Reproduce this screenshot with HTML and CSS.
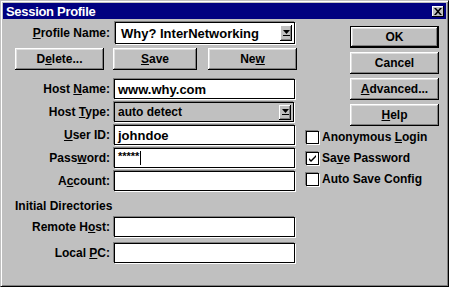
FILE: index.html
```html
<!DOCTYPE html>
<html lang="en">
<head>
    <meta charset="UTF-8">
    <title>Session Profile</title>
    <link rel="stylesheet" href="styles.css">
</head>
<body>
    <div class="dialog">
        <div class="titlebar">
            <span class="title">Session Profile</span>
            <span class="close">
                <svg width="8" height="7" viewBox="0 0 8 7"><path d="M0 0h2l2 2.2L6 0h2L5 3.5 8 7H6L4 4.8 2 7H0l3-3.5z" fill="#000"/></svg>
            </span>
        </div>
        <div class="main">
            <div class="form">
                <div class="row">
                    <label class="lbl"><u>P</u>rofile Name:</label>
                    <div class="combo big">
                        <span class="val">Why? InterNetworking</span>
                        <span class="arrow"><svg width="7" height="6" viewBox="0 0 7 6"><path d="M0 0h7L3.5 4z M0 5h7v1H0z" fill="#000"/></svg></span>
                    </div>
                </div>
                <div class="actions">
                    <button class="btn del">D<u>e</u>lete...</button>
                    <button class="btn save"><u>S</u>ave</button>
                    <button class="btn new">Ne<u>w</u></button>
                </div>
                <div class="fields">
                    <label class="lbl">Host <u>N</u>ame:</label>
                    <div class="input">www.why.com</div>
                    <label class="lbl">Host <u>T</u>ype:</label>
                    <div class="combo gray">
                        <span class="val">auto detect</span>
                        <span class="arrow"><svg width="7" height="6" viewBox="0 0 7 6"><path d="M0 0h7L3.5 4z M0 5h7v1H0z" fill="#000"/></svg></span>
                    </div>
                    <label class="lbl"><u>U</u>ser ID:</label>
                    <div class="input">johndoe</div>
                    <label class="lbl">Pass<u>w</u>ord:</label>
                    <div class="input"><span class="stars">*****</span><span class="caret"></span></div>
                    <label class="lbl">A<u>c</u>count:</label>
                    <div class="input"></div>
                </div>
                <div class="section">Initial Directories</div>
                <div class="fields dirs">
                    <label class="lbl">Remote H<u>o</u>st:</label>
                    <div class="input"></div>
                    <label class="lbl">Local <u>P</u>C:</label>
                    <div class="input"></div>
                </div>
            </div>
            <div class="side">
                <div class="buttons">
                    <button class="btn default">OK</button>
                    <button class="btn">Cancel</button>
                    <button class="btn"><u>A</u>dvanced...</button>
                    <button class="btn"><u>H</u>elp</button>
                </div>
                <div class="checks">
                    <div class="check"><span class="box"></span><span>Anonymous <u>L</u>ogin</span></div>
                    <div class="check"><span class="box"><svg width="9" height="9" viewBox="0 0 9 9"><path d="M1 4l2 2 5-5v2L3 8 1 6z" fill="#000"/></svg></span><span>Sa<u>v</u>e Password</span></div>
                    <div class="check"><span class="box"></span><span>Auto Save Config</span></div>
                </div>
            </div>
        </div>
    </div>
</body>
</html>
```

FILE: styles.css
```css
body {
    margin: 0;
    padding: 0;
    background: #c0c0c0;
    font-family: 'Liberation Sans', Arial, sans-serif;
    font-weight: bold;
    font-size: 12px;
    color: #000;
}
.dialog {
    width: 449px;
    height: 287px;
    box-sizing: border-box;
    background: #c0c0c0;
    border: 1px solid;
    border-color: #c0c0c0 #000 #000 #c0c0c0;
    box-shadow: inset 1px 1px 0 #fff, inset -1px -1px 0 #808080;
    padding: 2px;
}
.titlebar {
    height: 16px;
    background: #000080;
    display: flex;
    align-items: center;
    justify-content: space-between;
    padding: 0 2px 0 3px;
}
.title {
    color: #fff;
    font-size: 13px;
    letter-spacing: -0.3px;
}
.close {
    width: 12px;
    height: 11px;
    box-sizing: border-box;
    background: #c0c0c0;
    box-shadow: inset -1px -1px 0 #000, inset 1px 1px 0 #fff;
    display: flex;
    align-items: center;
    justify-content: center;
}
.main {
    display: flex;
    padding: 3px 0 0 12px;
}
.form {
    width: 282px;
}
.row {
    display: flex;
    align-items: center;
    gap: 5px;
}
.lbl {
    width: 95px;
    text-align: right;
    white-space: nowrap;
}
.combo {
    width: 180px;
    box-sizing: border-box;
    border: 1px solid #000;
    box-shadow: -1px -1px 0 #808080, 1px 1px 0 #fff;
    background: #fff;
    display: flex;
    align-items: center;
    justify-content: space-between;
    padding: 0 2px 0 5px;
}
.combo.big {
    height: 22px;
    font-size: 13px;
}
.combo.gray {
    height: 20px;
    background: #c0c0c0;
    padding-left: 3px;
}
.arrow {
    width: 12px;
    height: 16px;
    box-sizing: border-box;
    background: #c0c0c0;
    box-shadow: inset -1px -1px 0 #000, inset 1px 1px 0 #fff, inset -2px -2px 0 #808080;
    display: flex;
    align-items: center;
    justify-content: center;
}
.combo.gray .arrow {
    height: 15px;
}
.actions {
    display: flex;
    margin-top: 4px;
}
.btn {
    height: 22px;
    box-sizing: border-box;
    background: #c0c0c0;
    border: none;
    padding: 0;
    font-family: inherit;
    font-weight: bold;
    font-size: 12px;
    color: #000;
    box-shadow: inset -1px -1px 0 #000, inset 1px 1px 0 #fff, inset -2px -2px 0 #808080, inset 2px 2px 0 #dfdfdf;
}
.btn.del { width: 89px; }
.btn.save { width: 84px; margin-left: 9px; }
.btn.new { width: 89px; margin-left: 11px; }
.fields {
    display: grid;
    grid-template-columns: 95px 181px;
    column-gap: 4px;
    row-gap: 3px;
    align-items: center;
    margin-top: 9px;
}
.input {
    height: 20px;
    box-sizing: border-box;
    background: #fff;
    border: 1px solid #000;
    box-shadow: -1px -1px 0 #808080, 1px 1px 0 #fff;
    display: flex;
    align-items: center;
    padding-left: 3px;
    font-size: 13px;
}
.stars {
    font-size: 11px;
    align-self: flex-start;
    margin-top: 1px;
}
.caret {
    width: 1px;
    height: 14px;
    background: #000;
    margin-left: 1px;
}
.section {
    margin-top: 8px;
    height: 14px;
    line-height: 14px;
}
.dirs {
    margin-top: 4px;
    row-gap: 6px;
}
.side {
    margin-left: 9px;
    margin-top: 4px;
}
.buttons {
    display: flex;
    flex-direction: column;
    gap: 4px;
    margin-left: 44px;
    width: 89px;
}
.btn.default {
    border: 1px solid #000;
}
.checks {
    display: flex;
    flex-direction: column;
    gap: 7px;
    margin-top: 4px;
}
.check {
    display: flex;
    align-items: center;
    gap: 3px;
    height: 14px;
    white-space: nowrap;
}
.box {
    width: 13px;
    height: 13px;
    box-sizing: border-box;
    background: #fff;
    border: 1px solid #000;
    box-shadow: -1px -1px 0 #808080, 1px 1px 0 #fff;
    display: flex;
    align-items: center;
    justify-content: center;
}
```
